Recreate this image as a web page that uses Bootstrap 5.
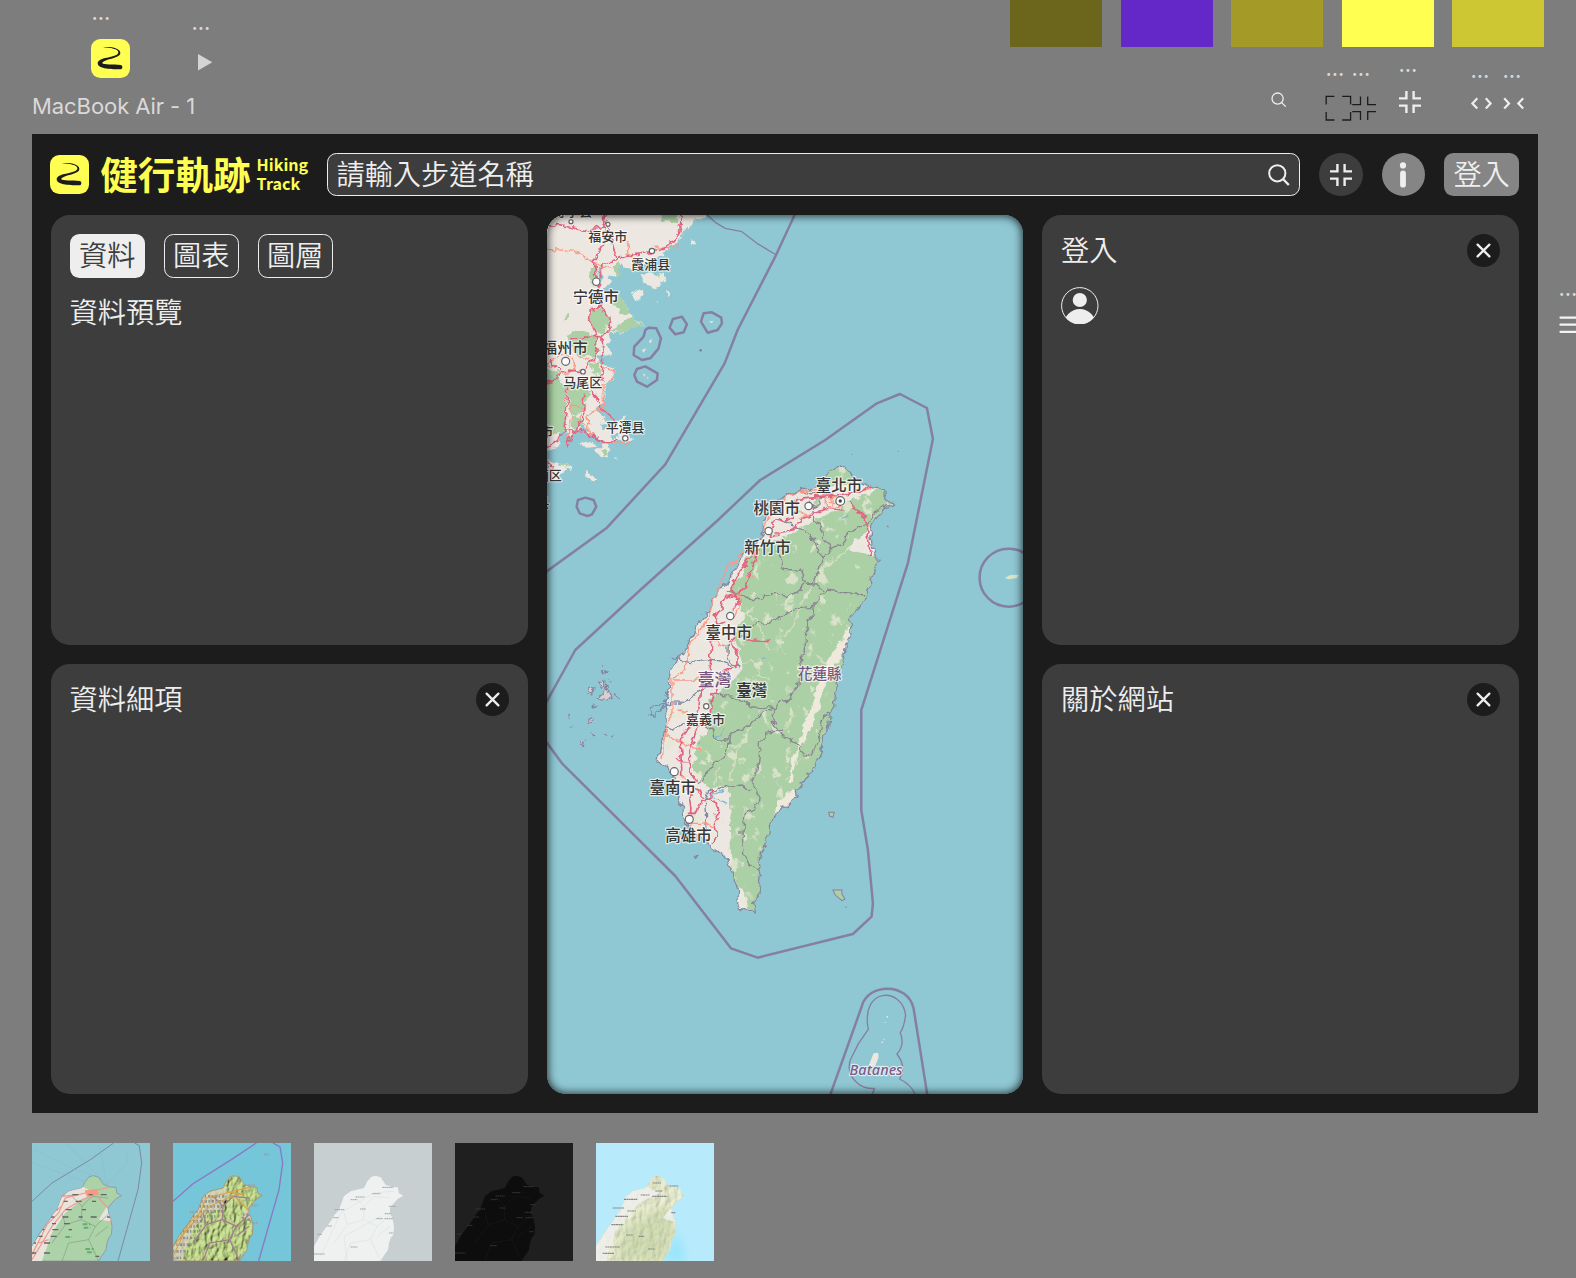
<!DOCTYPE html>
<html lang="zh-Hant">
<head>
<meta charset="utf-8">
<meta name="viewport" content="width=device-width, initial-scale=1">
<title>健行軌跡 Hiking Track</title>
<link href="https://cdn.jsdelivr.net/npm/bootstrap@5.3.0/dist/css/bootstrap.min.css" rel="stylesheet">
<style>
:root{--gap:18.8px;--ink:#1c1c1c;--panel:#3d3d3d;--paper:#eee;--sun:#ffff52}
body{background:#7d7d7d;color:var(--paper);width:1576px;height:1278px;overflow:hidden;position:relative;font-family:"Noto Sans CJK TC","Noto Sans",sans-serif}
svg{display:block;flex:none}
.topzone{height:134px;padding-right:32px;gap:18.4px}
.swatch{width:92px;height:47px}
.asset{position:absolute}
.lbl{position:absolute;font:400 22px/22px Inter,sans-serif;letter-spacing:-.07px;color:#d9d9d9;white-space:pre}
.frame{margin-left:32px;width:1506px;height:979px;background:var(--ink);padding:var(--gap)}
.g{gap:var(--gap)}
.topbar{height:43.6px}
.brand{color:var(--sun);width:257.9px}
.brand-zh{font-size:37.6px;font-weight:700;line-height:1;margin-left:11px;padding-bottom:4px}
.brand-en{font-size:16.1px;font-weight:700;line-height:19.2px;margin-left:6px;padding-bottom:1px}
.field{border:1.5px solid var(--paper);border-radius:9.4px;background:var(--panel);padding:0 8px 0 8px}
.t{font-size:28.2px;line-height:30px;font-weight:350;padding-bottom:3px}
.roundbtn{width:43.6px;height:43.6px;background:var(--panel)}
.grey{background:#858585}
.pill{width:75.2px;height:43.6px;border-radius:9.4px;font-size:28.2px;line-height:1;padding-bottom:3px;font-weight:350}
.pill.line{border:1.4px solid var(--paper)}
.pill.on{background:var(--paper);color:var(--panel)}
.panel{background:var(--panel);border-radius:var(--gap);padding:var(--gap)}
.close{width:33px;height:33px;background:var(--ink)}
.avatar{margin-top:1px}
.column{flex:1 1 0;min-width:0}
.map{border-radius:var(--gap);overflow:hidden;position:relative;background:#8fc7d3}
.map::after{content:"";position:absolute;inset:0;border-radius:inherit;box-shadow:inset 0 0 8px 1px rgba(0,0,0,.75)}
.map text{font-family:"Noto Sans CJK TC","Noto Sans",sans-serif;font-weight:500;fill:#383838;stroke:#fff;stroke-opacity:.7;stroke-width:7px;paint-order:stroke;stroke-linejoin:round;text-anchor:middle;transform:translate(-2.5px,-2.5px)}
.sc{font-family:"Noto Sans CJK SC",sans-serif !important}
.bd{fill:none;stroke:#8580a3;stroke-width:7.5;stroke-linejoin:round}
.ad{fill:none;stroke:#8a8590;stroke-width:4;stroke-linejoin:round}
.hw{fill:none;stroke:#e2637f;stroke-width:5;stroke-linejoin:round}
.or{fill:none;stroke:#fa9a84;stroke-width:4;stroke-linejoin:round}
.land{fill:#ece7e1}.gr{fill:#acd0a5}.sea{fill:#8fc7d3}
.dot{fill:#fff;stroke:#666;stroke-width:3.5}
.thumbs{padding:30.2px 0 0 32px;gap:23px}
</style>
<script src="https://cdn.jsdelivr.net/npm/bootstrap@5.3.0/dist/js/bootstrap.bundle.min.js"></script>
</head>
<body>
<svg width="0" height="0" class="position-absolute">
  <defs>
    <symbol id="logo" viewBox="0 0 117 117"><rect width="117" height="117" rx="28" fill="#ffff52"/><path fill="#1c1c1c" d="M36 25C58 22 87 27 88 41C89 53 66 57 54 61C43 65 33 69 34 73C36 78 68 76 89 78C96 79 96 91 88 91C66 91 20 91 20 73C20 62 39 58 54 55C70 51 82 48 82 40C81 30 59 26 36 25Z"/></symbol>
    <symbol id="shrink" viewBox="0 0 22 22"><path fill="none" stroke="#eee" stroke-width="2.4" d="M0 7.4H7.4V0M14.6 0V7.4H22M0 14.6H7.4V22M22 14.6H14.6V22"/></symbol>
    <symbol id="x" viewBox="0 0 33 33"><path fill="none" stroke="#eee" stroke-width="2.3" stroke-linecap="round" d="M10.6 10.6L22.4 22.4M22.4 10.6L10.6 22.4"/></symbol>
    <path id="north" d="M185 98L200 103 215 125 236 132 252 133 254 150 268 158 252 167 240 180 228 195 228 210 235 225 240 250 238 275 230 285 225 300 222 320 205 345 200 354H0V310L20 275 50 235 62 215 75 200 90 160 110 145 150 135 160 115 172 101Z"/>
    <path id="ridges" fill="none" d="M120 160L150 190 180 160 228 165M150 190L148 230 190 250 228 215M148 230L100 245 60 300M190 250L170 290 200 354M170 290L110 300 90 354M228 250L190 280M100 245L90 210"/>
    <clipPath id="nclip"><use href="#north"/></clipPath>
    <clipPath id="face"><circle cx="18.8" cy="18.8" r="18.4"/></clipPath>
    <filter id="relief" x="0" y="0" width="100%" height="100%"><feTurbulence type="fractalNoise" baseFrequency=".07 .045" numOctaves="3" seed="4"/><feDiffuseLighting surfaceScale="9" lighting-color="#cfe896"><feDistantLight azimuth="215" elevation="50"/></feDiffuseLighting></filter>
    <filter id="softrelief" x="0" y="0" width="100%" height="100%"><feTurbulence type="fractalNoise" baseFrequency=".06 .04" numOctaves="3" seed="9"/><feDiffuseLighting surfaceScale="4" lighting-color="#f0f4d6"><feDistantLight azimuth="215" elevation="60"/></feDiffuseLighting></filter>
    <filter id="blur"><feGaussianBlur stdDeviation="14"/></filter>
    <!-- roughens coastlines, roads and county lines -->
    <filter id="rough" filterUnits="userSpaceOnUse" x="0" y="-440" width="1150" height="1420" color-interpolation-filters="sRGB"><feTurbulence type="fractalNoise" baseFrequency=".045" numOctaves="2" seed="3" result="n"/><feDisplacementMap in="SourceGraphic" in2="n" scale="24" xChannelSelector="R" yChannelSelector="G"/></filter>
    <filter id="rough2" filterUnits="userSpaceOnUse" x="0" y="0" width="520" height="900" color-interpolation-filters="sRGB"><feTurbulence type="fractalNoise" baseFrequency=".045" numOctaves="3" seed="5" result="n"/><feDisplacementMap in="SourceGraphic" in2="n" scale="26" xChannelSelector="R" yChannelSelector="G"/></filter>
    <filter id="mottle" filterUnits="userSpaceOnUse" x="300" y="-440" width="800" height="1420" color-interpolation-filters="sRGB"><feTurbulence type="fractalNoise" baseFrequency=".03 .022" numOctaves="4" seed="12"/><feColorMatrix values="0 0 0 0 .9  0 0 0 0 .91  0 0 0 0 .83  9 0 0 0 -5.7"/></filter>
  </defs>
</svg>

<!-- loose assets on the design canvas -->
<div class="topzone d-flex justify-content-end align-items-start">
  <div class="swatch" style="background:#6b661b"></div>
  <div class="swatch" style="background:#6428c8"></div>
  <div class="swatch" style="background:#a39a28"></div>
  <div class="swatch" style="background:#ffff52"></div>
  <div class="swatch" style="background:#ccc733"></div>
</div>
<div class="lbl" style="left:91.5px;top:1px">...</div>
<div class="lbl" style="left:191.5px;top:11px">...</div>
<div class="lbl" style="left:32px;top:95px">MacBook Air - 1</div>
<div class="lbl" style="left:1325.5px;top:57px">...</div>
<div class="lbl" style="left:1351.5px;top:57px">...</div>
<div class="lbl" style="left:1398.5px;top:53px">...</div>
<div class="lbl" style="left:1470.5px;top:59px">...</div>
<div class="lbl" style="left:1502.5px;top:59px">...</div>
<div class="lbl" style="left:1558.5px;top:277px">...</div>
<svg class="asset" style="left:91.3px;top:39px" width="39" height="39"><use href="#logo"/></svg>
<svg class="asset" style="left:198px;top:54px" width="15" height="17"><path fill="#d4d4d4" d="M0 0L14.3 8.2 0 16.4Z"/></svg>
<svg class="asset" style="left:1270px;top:91px" width="18" height="18"><g fill="none" stroke="#eee" stroke-width="1.3"><circle cx="7.6" cy="7.6" r="5.6"/><path d="M11.6 11.6L15.8 15.6"/></g></svg>
<svg class="asset" style="left:1325px;top:95px" width="53" height="27"><path fill="none" stroke="#1c1c1c" stroke-width="1.3" d="M9.4 1.4H1.2V9.6M17.2 1.4H25.6V9.6M1.2 17V25H9.4M25.6 17V25H17.2M27.2 9.6H35.5V1.4M42.7 1.4V9.6H51M27.2 16.6H35.5V25M51 16.6H42.7V25"/></svg>
<svg class="asset" style="left:1399px;top:91.4px" width="22" height="22"><use href="#shrink"/></svg>
<svg class="asset" style="left:1470px;top:97px" width="56" height="13"><path fill="none" stroke="#eee" stroke-width="2.2" d="M7.3 1.2L2.4 6.4 7.3 11.6M15.8 1.2L20.6 6.4 15.8 11.6M34.2 1.2L39 6.4 34.2 11.6M53.2 1.2L48.3 6.4 53.2 11.6"/></svg>
<svg class="asset" style="left:1559px;top:316px" width="17" height="18"><path stroke="#f4f4f4" stroke-width="2.3" stroke-linecap="round" d="M1.5 1.6H20M1.5 8.7H20M1.5 15.8H20"/></svg>

<main class="frame d-flex flex-column g">
  <header class="topbar d-flex align-items-center g">
    <div class="brand d-flex align-items-center text-nowrap">
      <svg width="39" height="39" style="margin-left:-.5px"><use href="#logo"/></svg>
      <span class="brand-zh">健行軌跡</span>
      <span class="brand-en">Hiking<br>Track</span>
    </div>
    <div class="field flex-grow-1 h-100 d-flex align-items-center justify-content-between">
      <span class="t">請輸入步道名稱</span>
      <svg width="24" height="24"><g fill="none" stroke="#eee" stroke-width="2"><circle cx="10.3" cy="10.3" r="8.1"/><path stroke-width="2.4" d="M16 16L21.8 22"/></g></svg>
    </div>
    <div class="roundbtn rounded-circle d-flex align-items-center justify-content-center"><svg width="22" height="22"><use href="#shrink"/></svg></div>
    <div class="roundbtn grey rounded-circle d-flex align-items-center justify-content-center"><svg width="8" height="26"><circle cx="4" cy="3.4" r="3.1" fill="#eee"/><rect x="1.1" y="8.6" width="5.8" height="17" rx="2.9" fill="#eee"/></svg></div>
    <div class="pill grey d-flex align-items-center justify-content-center">登入</div>
  </header>

  <div class="d-flex g flex-grow-1">
    <div class="column d-flex flex-column g">
      <section class="panel column d-flex flex-column g">
        <div class="d-flex g">
          <div class="pill on d-flex align-items-center justify-content-center">資料</div>
          <div class="pill line d-flex align-items-center justify-content-center">圖表</div>
          <div class="pill line d-flex align-items-center justify-content-center">圖層</div>
        </div>
        <div class="t">資料預覽</div>
      </section>
      <section class="panel column">
        <div class="d-flex justify-content-between align-items-center"><span class="t">資料細項</span><span class="close rounded-circle"><svg width="33" height="33"><use href="#x"/></svg></span></div>
      </section>
    </div>

    <div class="column map">
      <svg class="w-100 h-100" viewBox="546.7 215 477 879" preserveAspectRatio="none">
        <!-- mainland coast -->
        <g transform="translate(540 205) scale(.33333)">
          <g filter="url(#rough2)">
          <path class="land" d="M0 0H510L490 36 462 44 448 68 425 72 420 112 385 132 350 158 330 165 300 190 265 192 240 172 236 205 205 215 215 235 190 250 205 270 235 262 250 290 270 318 280 345 312 357 270 368 252 380 205 385 215 405 198 420 212 445 188 470 225 490 215 532 195 540 192 585 170 610 185 640 215 655 252 640 262 680 278 712 240 705 205 718 170 700 150 680 120 680 100 665 92 720 70 700 48 730 20 738H0Z"/>
          <path class="land" d="M300 212L330 205 350 210 372 205 378 225 360 245 340 255 330 240 305 235ZM275 265L305 248 310 270 285 290ZM380 258L392 262 385 280ZM450 112L462 108 468 120 455 125ZM345 290L355 288 350 298ZM62 780L75 778 98 790 60 808 40 830 20 832V760ZM132 808L145 800 170 825 165 832 138 820ZM165 735L185 718 215 730 200 760 180 755ZM260 172L300 170 300 190 270 198ZM120 715L150 708 170 725 135 728ZM222 760L230 756 226 768Z"/>
          <path class="gr" d="M145 185L165 180 175 230 160 245 148 220ZM225 170L245 190 235 210 222 205ZM350 30H410L408 55 375 48ZM235 262L250 290 270 318 260 332 235 318 220 290 230 275ZM208 378L250 350 275 330 285 350 312 357 270 370 245 380ZM155 310L190 312 205 350 195 385 165 380 148 350ZM75 322L88 325 80 350ZM80 390L120 375 165 395 175 430 160 455 110 450 80 410ZM0 490L55 500 60 540 0 545ZM0 540L80 540 75 600 70 680 0 690ZM85 530L150 560 130 620 100 630 85 600ZM150 480L175 470 180 510 160 505ZM90 630L130 640 125 670 95 665ZM180 735L200 735 205 748 190 755ZM65 775L90 785 70 795ZM345 208L360 205 358 215Z"/>
          <path class="sea" d="M165 460Q185 450 200 455L185 475ZM20 510L60 525 75 530 30 520ZM170 185L185 192 190 215 180 240ZM60 680L110 700 75 760 50 740ZM110 655L140 672 130 685ZM215 655L200 670 180 668 190 655ZM210 690L240 690 225 702Z"/>
          <path class="or" d="M0 132L100 138 160 170 190 190 218 188M260 110L270 160M340 130L418 125M20 480Q50 440 95 455Q110 475 95 500Q70 520 50 485ZM110 450L180 480 222 495 212 530 188 540 190 610 140 630 145 690M80 725L95 600 120 605 120 650 160 690M195 715L275 712M20 845L28 850"/>
          <path class="hw" d="M0 55L80 65 140 78 190 65 200 0M190 30L205 70 220 130 230 160 360 135 410 105 425 50V0M190 65L192 110 162 165 168 230 180 250 178 305 150 312 148 350 165 390 170 440 135 500 80 495M230 160L185 178 178 240 182 300 205 340 210 370 185 400 190 470 182 530M165 390L90 408M165 395L185 395M30 465L55 495 75 500 110 495M20 535L50 520 60 495M82 545L80 600 70 680 50 705 20 728M130 570V640L95 690 80 725M75 672L135 682 195 718 230 705M150 560L170 580 185 610 225 650M20 765L40 795"/>
          </g>
          <path class="bd" style="stroke-width:4" d="M490 20L525 52 555 70 605 80 650 115 708 150"/>
          <path class="bd" d="M770 15L705 155 592 375 553 475 375 778 200 968 15 1102"/>
          <path class="bd" d="M325 368L348 370 362 400 355 430 330 460 305 465 280 450 282 425 310 395 315 375ZM398 342L425 335 440 358 430 382 405 388 388 368ZM490 325L515 322 543 338 545 355 532 375 502 383 482 350ZM290 492L315 484 352 505 350 525 320 545 290 530 282 510ZM113 885L135 878 160 885 168 905 155 928 142 933 118 925 109 905Z"/>
          <path class="land" d="M305 435L318 430 310 443ZM325 410L335 400 332 415ZM308 508L314 506 313 516ZM320 515L326 518 322 522ZM505 350L520 347 515 354Z"/><circle cx="481" cy="436" r="4" fill="#8580a3"/>
          <g class="dot"><circle cx="92" cy="50" r="6"/><circle cx="203" cy="58" r="6"/><circle cx="335" cy="138" r="8"/><circle cx="168" cy="230" r="11"/><circle cx="76" cy="469" r="12"/><circle cx="128" cy="500" r="7"/><circle cx="255" cy="700" r="8"/></g>
          <g font-size="39"><text class="sc" x="100" y="36">寿宁县</text><text class="sc" x="205" y="111">福安市</text><text class="sc" x="334" y="194">霞浦县</text><text class="sc" x="130" y="550">马尾区</text><text class="sc" x="257" y="684">平潭县</text><text class="sc" x="22" y="695">市</text><text class="sc" x="28" y="828">厢区</text><text class="sc" x="10" y="907">县</text></g>
          <g font-size="46"><text class="sc" x="169" y="293">宁德市</text><text class="sc" x="76" y="447">福州市</text></g>
        </g>
        <!-- Taiwan -->
        <g transform="translate(540 600) scale(.33333)">
          <path class="bd" d="M0 340L22 300 105 150 300-30 530-237 660-360 855-480 1010-590 1079-618 1160-576 1178-483 1103-111 963 330V630L983 750 998 910 994 950 938 1002 652 1073 572 1045 405 828 65 490 10 415"/>
          <circle class="bd" cx="1405" cy="-67" r="87"/>
          <clipPath id="tw"><path id="isle" d="M900-402L915-400 925-390 935-375 940-362 955-358 968-350 990-338 1010-334 1030-332 1032-310 1045-292 1060-288 1048-278 1035-274 1030-262 1015-250 1006-240 995-235 990-222 994-205 992-190 997-160 1005-135 1014-125 1010-100 1000-80 990-70 992-40 978-15 970 10 960 20 940 35 928 60 934 75 925 88 930 110 915 135 912 165 905 190 895 215 888 240 888 270 883 300 884 320 870 345 865 380 850 410 848 430 842 448 850 460 835 470 826 492 815 515 795 540 780 562 765 570 768 585 755 602 735 620 705 640 695 665 685 700 670 745 657 780 659 800 655 810 660 830 656 858 660 880 655 890 640 908 647 942 635 935 620 925 608 922 600 932 590 905 592 870 582 840 580 820 565 785 550 765 520 745 495 728 475 705 450 690 440 665 430 650 428 625 415 600 405 555 400 525 385 505 365 490 348 485 350 470 358 455 365 420 372 398 378 350 380 330 376 305 386 270 388 240 395 205 400 190 415 180 425 158 440 140 448 122 460 100 470 75 490 50 498 35 515 20 515 0 535-30 562-50 575-75 590-110 610-135 645-170 660-185 668-210 670-230 680-250 685-265 700-285 720-305 750-320 780-330 810-335 835-340 850-360 858-375 870-392Z"/></clipPath>
          <g filter="url(#rough)">
          <use href="#isle" class="land"/>
          <g clip-path="url(#tw)">
            <path class="gr" d="M850-420L945-420 940-360 900-340 880-345 850-340ZM822-312L840-300 835-275 822-285ZM940-305L1000-325 1080-360V-270L990-230 970-195 930-165 920-150 1005-132 1060-120 1000 10 960 50 900 300 840 480 760 600 700 640 690 700 650 960 625 925 610 870 575 850 565 560 540 560 500 560 480 530 460 510 470 430 500 390 510 340 505 300 570 250 610 200 580 100 610 60 600 0 570-20 575-55 610-70 620-130 650-150 680-170 740-190 780-215 820-240 880-260Z"/>
            <rect x="300" y="-440" width="800" height="1420" filter="url(#mottle)" opacity=".8"/>
            <path fill="#efe9dc" d="M920 78L905 120 870 165 845 215 830 250 820 300 795 360 780 410 770 445 750 490 748 545 762 548 758 520 772 460 790 430 812 380 825 350 840 315 845 275 870 225 895 180 915 150 940 110ZM745 575L715 600 700 645 740 640 770 590 762 570ZM590 860L600 895 610 930 590 930Z"/>
            <path fill="none" stroke="#dfe4ca" stroke-width="5" opacity=".7" d="M820-45L850-90 900-135 930-155M780 15L800-15 820-45M730 110L765 70 775 30M600 190L640 185 655 230 690 240M540 480L560 450 600 430 630 380M470 440L510 470 530 490M570 540L590 450 620 400M830 240L810 210 850 200M620 40L650 60 660 90 690 150M590 65L640 20M520 550L535 500M865 200L830 165"/>
          </g>
          <use href="#isle" fill="none" stroke="#8588a0" stroke-width="4" stroke-linejoin="round"/>
          <path class="ad" d="M635 80L655 68 670 74 720 55 745 40 780 25 818 22 822 10 850-20 860-30 970-15M818 22L822 45 800 60 808 75 795 105 795 155 780 175 785 205 775 255 755 275 750 300 718 305 705 325 630 320 615 300 520 280M705 325L690 345 700 370 725 405 765 430 800 468 815 465 830 430 850 350 870 338M705 325L670 335 640 365 605 390 570 400 565 420 525 420 525 395 490 370M570 420L555 465 520 490 490 535 470 545M725 390L680 400 660 430 655 490 635 550 645 565M640 570L600 555 575 565 560 555 510 580M645 565L660 595 655 615 615 635 605 700 610 745 625 795 655 810M815-50L850-30M815-50L850-120 870-155 910-170 925-205 980-230 1010-270 1050-285M850-120L825-170 800-205 765-220 740-230 715-245M870-155L850-190 845-220 820-240 818-270M815-50L790-60 780-90 725-92 720-130 710-145M815-50L795-50 770-20 735-8 710-20 670-18 665-2 640 0 585-20 560-30M565 120L562 180 590 200M780-325L835-315 840-285 820-275 810-300"/>
          <path fill="none" stroke="#7f8aa5" stroke-width="4" d="M395 175L450 188 510 180 600 200M388 270L375 310 335 325 330 340 345 345 370 320 385 308 430 310 470 280 515 255M370 375L400 395 430 370M510 560L495 600 500 660 490 720"/>
          <path class="or" d="M870-330L820-330 770-325 730-305 700-270 670-215M520 0L560-90 590-130 640-150M520 0L505 45 480 95 445 140 435 205 415 225 395 235 395 340 375 400 365 475M400 240H470L515 235M520 125L545 135 560 138M600-20L595 30 580 60M375 400L430 430 490 455M415 330L440 335M395 510L440 540M450 670L490 670 530 682M775-245L800-255 770-270M620-70H650M855-310H900V-280H855ZM875-310V-280M855-295H900M920-320L990-335"/>
          <path class="hw" d="M690-190L700-235 760-245 770-305 830-310 890-315 960-325 990-345M690-190L760-215 790-245 860-275 910-270M930-295L980-235 990-132M650-150L620-115 580-60 575-30 600 5 580 25M650-150L640-110 620-50 585-10 555-15 545 20 525 50 530 75 555 65M515 110L510 200 480 280 475 330 420 420 425 530M590 110L570 130 590 155 590 200 555 210 515 290 510 340 465 400 450 450 450 510 465 540M405 475L430 485 455 485M600 110L640 120 690 122M445 560L455 625 450 680M445 640H465L480 605 515 590 512 562M470 570L490 590 520 605 538 632 525 660 528 710 515 730"/>
          <g fill="none" stroke="#7db9d2" stroke-width="4"><path d="M510 590L550 570 570 555M520 590L560 610M530 415L548 385M665 175L675 170M905-245L928-255M470 425L480 435"/></g>
          <g fill="#d9cfcf" stroke="#8b7f9e" stroke-width="3"><path d="M190 205L196 215 190 222ZM175 248L190 243 190 260 182 262ZM195 250L203 262 196 266ZM200 270L217 283 210 293 195 303 172 292 185 288ZM208 238L214 244ZM225 280L232 298ZM150 265L158 260 155 285 143 282ZM160 312L168 316 158 318ZM148 352L165 362 150 370ZM86 348L90 352 86 354ZM88 380L93 383ZM120 425L132 424 130 436ZM153 400L158 408 153 410ZM192 405L197 410ZM212 408L217 411Z"/></g>
          </g>
          <g fill="#d9cfcf" stroke="#8b7f9e" stroke-width="3"><path d="M462 770L474 765 466 775Z"/><path class="gr" d="M865 637H882L878 652 868 648ZM878 870H905V882L914 897 905 902 885 885Z"/><path d="M916 920l3 3ZM1040-222l5 3ZM1073-447l2 2ZM935-438l2 2Z"/></g>
          <g class="dot"><circle cx="805" cy="-282" r="11"/><circle cx="685" cy="-207" r="11"/><circle cx="570" cy="48" r="11"/><circle cx="498" cy="319" r="8"/><circle cx="402" cy="515" r="12"/><circle cx="447" cy="658" r="12"/><circle cx="900" cy="-297" r="13"/></g><circle cx="900" cy="-297" r="5" fill="#444"/>
          <g font-size="46.5"><text x="899" y="-326">臺北市</text><text x="712" y="-257">桃園市</text><text x="684" y="-139">新竹市</text><text x="568" y="116">臺中市</text><text x="400" y="580">臺南市</text><text x="447" y="726">高雄市</text><text x="637" y="292" style="font-weight:700">臺灣</text></g>
          <text x="498" y="374" font-size="39">嘉義市</text>
          <text x="525" y="261" font-size="51" style="fill:#76567f">臺灣</text><text x="841" y="241" font-size="44" style="fill:#76567f">花蓮縣</text>
          <path fill="#dbe6c6" d="M1394-66L1408-74 1436-76 1430-66 1405-62Z"/>
        </g>
        <!-- Batanes -->
        <g transform="translate(780 600) scale(.33333)">
          <path class="bd" d="M148 1490L245 1218C262 1150 382 1145 400 1225L442 1490"/>
          <path class="bd" style="stroke-width:4" d="M275 1485L283 1465C240 1470 195 1430 210 1380L235 1330 264 1288C240 1160 365 1160 376 1245Q372 1280 360 1298Q375 1335 350 1362Q380 1400 358 1437Q395 1455 405 1485"/>
          <path class="land" d="M280 1360L294 1358 295 1372 285 1398 265 1398ZM302 1328l6-5v6ZM308 1318l4-2v5ZM319 1248h4v5h-4ZM313 1266h3v3h-3Z"/>
          <text x="290" y="1427" font-size="43.5" style="fill:#7d5a86;font-family:'Noto Sans',sans-serif;font-style:italic">Batanes</text>
        </g>
      </svg>
    </div>

    <div class="column d-flex flex-column g">
      <section class="panel column d-flex flex-column g">
        <div class="d-flex justify-content-between align-items-center"><span class="t">登入</span><span class="close rounded-circle"><svg width="33" height="33"><use href="#x"/></svg></span></div>
        <svg class="avatar" width="37.6" height="37.6"><g clip-path="url(#face)" fill="#eee"><circle cx="18.8" cy="13" r="7.1"/><circle cx="18.8" cy="38" r="16"/></g><circle cx="18.8" cy="18.8" r="18.2" fill="none" stroke="#eee" stroke-width="1"/></svg>
      </section>
      <section class="panel column">
        <div class="d-flex justify-content-between align-items-center"><span class="t">關於網站</span><span class="close rounded-circle"><svg width="33" height="33"><use href="#x"/></svg></span></div>
      </section>
    </div>
  </div>
</main>

<!-- base map previews -->
<div class="thumbs d-flex">
  <svg width="118" height="118" viewBox="0 0 354 354">
    <rect width="354" height="354" fill="#8fc7d3"/><use href="#north" fill="#acd2a8" stroke="#8588a0" stroke-width="2"/>
    <g clip-path="url(#nclip)"><path fill="#e8e4dc" d="M150 130L110 145 90 160 60 220 0 310V354H30L60 270 100 210 150 170 190 150ZM225 190L200 230 238 235Z"/><use href="#ridges" stroke="#879b89" stroke-width="2"/><path fill="none" stroke="#ee9a90" stroke-width="3.5" d="M0 335L45 245 80 210 100 165 160 150 240 130M0 350L60 250 100 200 150 170 200 150M60 210L90 190M90 160L140 155M180 140V165M200 165L228 195 238 240M20 300L50 290"/><path fill="#f39b83" d="M158 142L195 138 200 155 165 162Z"/><path stroke="#666" stroke-width="4" stroke-dasharray="12 24 18 31" fill="none" d="M85 155H240M95 175H200M65 200H180M55 222H240M60 242H130M25 260H120M20 280H90M0 300H60M0 330H80M190 340H205"/><path stroke="#62ad70" stroke-width="6" stroke-dasharray="14 5" d="M152 244H175M155 254H175M100 282H120M160 318H185M165 328H185"/></g>
    <path fill="none" stroke="#7e88a6" stroke-width="3" d="M0 175L60 120 175 50 245 0M308 0L322 8 329 60 318 140 258 354"/><path fill="none" stroke="#84bccd" stroke-width="1.3" d="M5 20L130 80 185 98M100 0L225 125M200 5L225 125 285 60 283 28M0 60L160 115"/>
  </svg>
  <svg width="118" height="118" viewBox="0 0 354 354">
    <rect width="354" height="354" fill="#76c6d9"/><g clip-path="url(#nclip)"><rect width="354" height="354" filter="url(#relief)"/><path fill="#d7d2c5" opacity=".75" d="M150 130L110 145 90 160 60 220 0 310V354H25L60 260 100 210 140 200 165 150ZM225 190L205 220 238 235Z"/><path stroke="#777" stroke-width="8" stroke-dasharray="4 6 7 4" opacity=".7" fill="none" d="M95 160H160M85 175H165M80 190H155M70 205H150M60 220H130M50 235H100M40 250H90M30 265H80M20 285H70M10 305H60M0 325H45M0 345H40M210 215H240M215 230H240"/><use href="#ridges" stroke="#a47d91" stroke-width="4"/><path fill="none" stroke="#d9a04c" stroke-width="3.5" d="M0 340L45 245 80 210 100 165 160 150 240 130M0 310L60 240 110 190 200 150M190 165L230 205M160 145L210 155"/></g><use href="#north" fill="none" stroke="#a49b7d" stroke-width="3"/><path stroke="#9aa2a4" stroke-width="7" stroke-dasharray="5 3" d="M225 127H247M50 207H75M235 187H258M240 240H255M200 337H215M273 34H290"/><path fill="none" stroke="#8b77c5" stroke-width="4" d="M0 175L60 122 175 50 250 0M300 0L321 12 329 60 318 140 257 354"/>
  </svg>
  <svg width="118" height="118" viewBox="0 0 354 354">
    <rect width="354" height="354" fill="#c8cfd1"/><use href="#north" fill="#eff1f0"/><g clip-path="url(#nclip)"><use href="#ridges" stroke="#dce2e1" stroke-width="2"/><path fill="none" stroke="#dce2e1" stroke-width="2" d="M20 340L80 210 180 150 240 145M100 354L90 280 200 220"/></g><path stroke="#9aa7ae" stroke-width="3" stroke-dasharray="5 1" d="M205 133H238M175 152H200M125 162H152M110 170H130M62 200H92M58 224H74M40 249H54M10 274H24M0 333H32M110 312H130M138 198H156M187 227H207M212 227H238M212 212H232M225 190H245M225 270H238"/>
  </svg>
  <svg width="118" height="118" viewBox="0 0 354 354">
    <rect width="354" height="354" fill="#1f1f1f"/><use href="#north" fill="#0d0d0d"/><g clip-path="url(#nclip)"><use href="#ridges" stroke="#191919" stroke-width="2"/></g><path stroke="#363636" stroke-width="3" stroke-dasharray="5 1" d="M205 131H238M172 149H197M122 159H149M108 170H128M62 198H90M56 222H72M36 247H52M5 273H20M0 330H32M106 308H126M134 195H152M184 224H204M212 224H234M210 208H232M225 185H242M223 266H236"/>
  </svg>
  <svg width="118" height="118" viewBox="0 0 354 354">
    <rect width="354" height="354" fill="#b7ebfc"/><path fill="#92e3f9" filter="url(#blur)" opacity=".8" d="M200 354L245 260 270 354Z"/><g clip-path="url(#nclip)"><rect width="354" height="354" filter="url(#softrelief)"/><path fill="#a9c084" opacity=".35" filter="url(#blur)" d="M170 110L200 125 180 140ZM80 260L200 190 240 240 210 354H60Z"/><path fill="#f0efed" opacity=".85" d="M150 130L110 145 90 160 60 220 0 310V354H30L60 260 130 180 190 150ZM225 195L200 225 238 238Z"/></g><path stroke="#888" stroke-width="3.5" stroke-dasharray="6 1" d="M220 129H247M178 144H200M134 156H160M169 160H214M84 169H124M50 195H84M94 204H120M58 220H96M46 245H82M28 312H72M20 331H54M226 209H238M90 276H110M128 280H145M156 318H176M170 120H195"/>
  </svg>
</div>
</body>
</html>
